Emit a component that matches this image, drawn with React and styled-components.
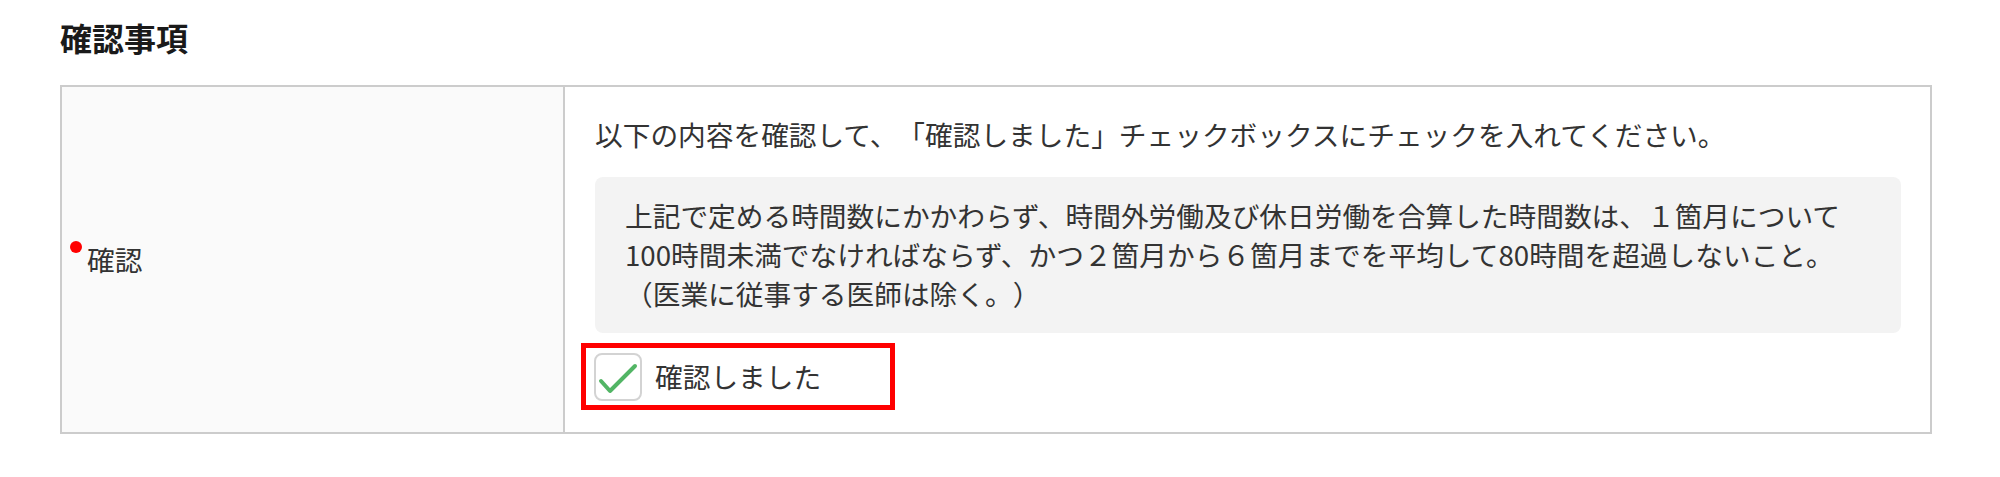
import React, { useState } from "react"
import styled, { createGlobalStyle } from "styled-components"

const GlobalStyle = createGlobalStyle`
  body {
    margin: 0;
    background: #ffffff;
    font-family: "Noto Sans CJK JP", "Noto Sans", sans-serif;
    color: #333333;
    text-spacing-trim: space-all;
  }
`

const Page = styled.div`
  padding: 15px 0 0 60px;
`

const Heading = styled.h2`
  margin: 0 0 25px;
  font-size: 32px;
  line-height: 45px;
  font-weight: 700;
  color: #1a1a1a;
`

const Table = styled.div`
  display: grid;
  grid-template-columns: 503px 1fr;
  width: 1872px;
  box-sizing: border-box;
  border: 2px solid #cccccc;
`

const LabelCell = styled.div`
  display: flex;
  align-items: center;
  padding-left: 8px;
  background: #fafafa;
  border-right: 2px solid #cccccc;
`

const Label = styled.div`
  display: flex;
  font-size: 27.7px;
  line-height: 39px;
  color: #333333;
`

const RequiredDot = styled.span`
  align-self: flex-start;
  width: 12px;
  height: 12px;
  margin: 1px 5px 0 0;
  border-radius: 50%;
  background: #ff0000;
`

const ValueCell = styled.div`
  display: flex;
  flex-direction: column;
  padding: 28px 29px 22px 30px;
`

const Lead = styled.p`
  margin: 0 0 23px;
  font-size: 27.7px;
  line-height: 39px;
`

const Notice = styled.div`
  padding: 19px 30px 20px;
  border-radius: 8px;
  background: #f3f3f3;
  font-size: 27.7px;
  line-height: 39px;
`

const Highlight = styled.div`
  display: flex;
  align-items: center;
  box-sizing: border-box;
  width: 314px;
  height: 67px;
  margin: 10px 0 0 -14px;
  padding-left: 8px;
  border: 5px solid #ff0000;
`

const CheckLabel = styled.label`
  display: flex;
  align-items: center;
  gap: 13px;
  font-size: 27.7px;
  line-height: 39px;
  cursor: pointer;
`

const Box = styled.span`
  display: flex;
  align-items: center;
  justify-content: center;
  box-sizing: border-box;
  width: 48px;
  height: 48px;
  border: 2px solid #d3d3d3;
  border-radius: 8px;
  background: #ffffff;
`

const Checkbox = ({ checked }) => (
  <Box>
    {checked && (
      <svg width="44" height="44" viewBox="0 0 44 44">
        <polyline
          points="5,26 14,36 39,11"
          fill="none"
          stroke="#52b565"
          strokeWidth="4"
          strokeLinecap="round"
          strokeLinejoin="round"
        />
      </svg>
    )}
  </Box>
)

const App = () => {
  const [checked, setChecked] = useState(true)

  return (
    <Page>
      <GlobalStyle />
      <Heading>確認事項</Heading>
      <Table>
        <LabelCell>
          <Label>
            <RequiredDot />
            確認
          </Label>
        </LabelCell>
        <ValueCell>
          <Lead>以下の内容を確認して、「確認しました」チェックボックスにチェックを入れてください。</Lead>
          <Notice>
            上記で定める時間数にかかわらず、時間外労働及び休日労働を合算した時間数は、１箇月について
            <br />
            100時間未満でなければならず、かつ２箇月から６箇月までを平均して80時間を超過しないこと。
            <br />
            （医業に従事する医師は除く。）
          </Notice>
          <Highlight>
            <CheckLabel onClick={() => setChecked(!checked)}>
              <Checkbox checked={checked} />
              確認しました
            </CheckLabel>
          </Highlight>
        </ValueCell>
      </Table>
    </Page>
  )
}

export default App
